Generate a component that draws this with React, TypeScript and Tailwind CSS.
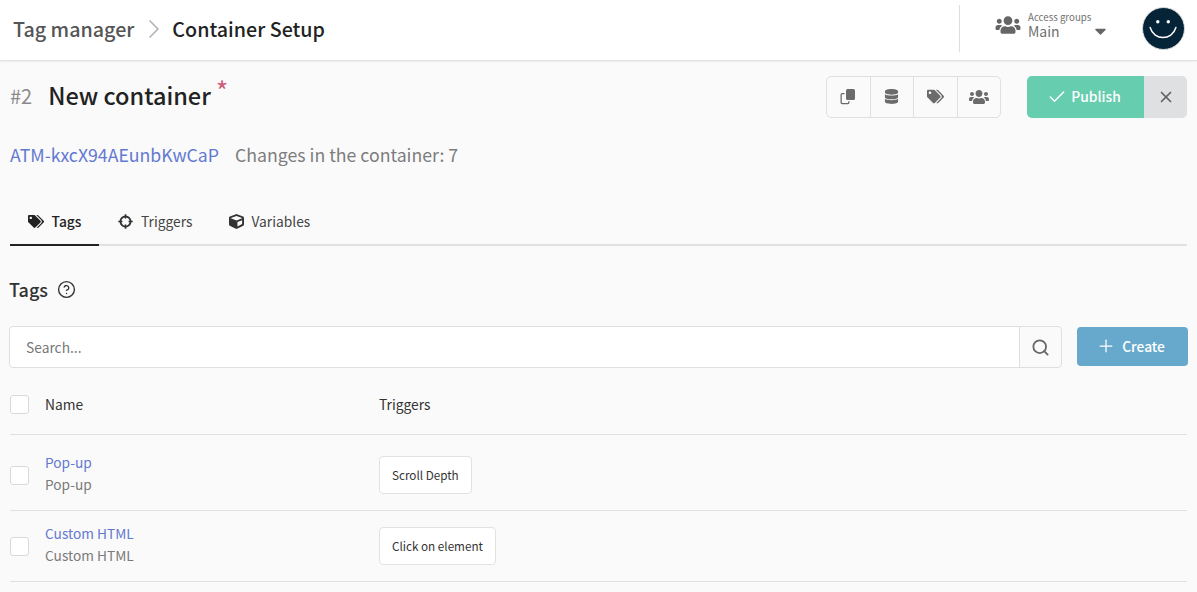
import { Check, ChevronRight, CircleHelp, Plus, Search, X } from 'lucide-react';
import { FaCaretDown, FaCube, FaDatabase, FaTags, FaUsers } from 'react-icons/fa';

const font = 'font-["Noto_Sans_CJK_JP","Noto_Sans",sans-serif]';

function CrosshairIcon({ className }: { className?: string }) {
  return (
    <svg viewBox="0 0 16 16" className={className} fill="none" stroke="currentColor">
      <circle cx="8" cy="8" r="5.4" strokeWidth="2" />
      <path d="M8 .3v4.4M8 11.3v4.4M.3 8h4.4M11.3 8h4.4" strokeWidth="1.8" />
    </svg>
  );
}

function CopyIcon({ className }: { className?: string }) {
  return (
    <svg viewBox="0 0 16 16" className={className} fill="currentColor">
      <path d="M6 1.500A1.500 1.500 0 0 1 7.500 0h6A1.500 1.500 0 0 1 15 1.500v8a1.500 1.500 0 0 1-1.500 1.500h-6A1.500 1.500 0 0 1 6 9.500z" />
      <path d="M4.600 4v1.300H2.500a.7.7 0 0 0-.7.7v7.300a.7.7 0 0 0 .7.7h5a.7.7 0 0 0 .7-.7v-1h1.300v1.300a1.700 1.700 0 0 1-1.700 1.700H2.200a1.700 1.700 0 0 1-1.700-1.700V5.700A1.700 1.700 0 0 1 2.200 4z" />
    </svg>
  );
}

function Smiley() {
  return (
    <div className="h-[43px] w-[43px] rounded-full border border-[#dddddd] bg-[#062438]">
      <svg viewBox="0 0 43 43" className="h-full w-full" fill="none">
        <circle cx="15.5" cy="14.500" r="1.800" fill="#fff" />
        <circle cx="26.500" cy="14.500" r="1.800" fill="#fff" />
        <path d="M7.500 20.500c4 14 23 14 27 0" stroke="#fff" strokeWidth="1.500" strokeLinecap="round" />
      </svg>
    </div>
  );
}

function Checkbox({ className = '' }: { className?: string }) {
  return <div className={`h-[19px] w-[19px] rounded-[3px] border border-[#d9d9d9] bg-white ${className}`} />;
}

function TagRow({ name, trigger, rowClass, checkClass }: { name: string; trigger: string; rowClass: string; checkClass: string }) {
  return (
    <div className={`flex items-center border-b border-[#e0e0e0] ${rowClass}`}>
      <div className="flex w-[35px]">
        <Checkbox className={checkClass} />
      </div>
      <div className="w-[334px] text-[13.7px] leading-[22px]">
        <div className="text-[#6379d1]">{name}</div>
        <div className="text-[#7b7b7b]">{name}</div>
      </div>
      <div className="mt-[4px] flex h-[38px] items-center rounded-[4px] border border-[#e2e2e2] bg-white px-[12px] text-[11.700px] text-[#333333]">
        {trigger}
      </div>
    </div>
  );
}

export default function App() {
  return (
    <div className={`${font} h-[592px] w-[1197px] overflow-hidden bg-[#fafafa]`}>
      <header className="flex h-[61px] items-center border-b border-[#e2e2e2] bg-white pb-[3px] pl-[13px] pr-[12px] shadow-[0_1px_2px_rgba(0,0,0,0.06)]">
        <span className="text-[19.700px] font-medium text-[#555555]">Tag manager</span>
        <ChevronRight className="ml-[4px] mr-[2px] h-[32px] w-[32px] text-[#b4b4b4]" strokeWidth={1.300} />
        <span className="text-[19.700px] font-medium text-[#222222]">Container Setup</span>
        <div className="ml-auto h-[47px] w-px bg-[#dddddd]" />
        <div className="mb-[8px] ml-[35px] flex w-[128px] items-center">
          <FaUsers className="h-[20px] w-[26px] text-[#666666]" />
          <div className="ml-[7px] flex flex-col text-[#707070]">
            <span className="text-[9.700px] leading-[12px]">Access groups</span>
            <span className="text-[14px] leading-[16px]">Main</span>
          </div>
          <FaCaretDown className="ml-auto mr-[16px] mt-[12px] h-[18px] w-[13px] text-[#666666]" />
        </div>
        <div className="ml-[19px]">
          <Smiley />
        </div>
      </header>

      <main className="pl-[10px] pr-[10px]">
        <div className="flex items-center pt-[13px]">
          <span className="mb-[1px] text-[20px] text-[#8a8a8a]">#2</span>
          <span className="mb-[3px] ml-[16px] text-[23.500px] font-medium leading-[42px] text-[#222222]">New container</span>
          <span className="mb-[12px] ml-[5px] text-[27px] leading-[20px] text-[#cf5d7c]">*</span>
          <div className="ml-auto flex h-[42px] w-[175px] rounded-[5px] border border-[#e0e0e0] text-[#6b6b6b]">
            <div className="flex flex-1 items-center justify-center border-r border-[#e0e0e0]"><CopyIcon className="h-[16px] w-[16px]" /></div>
            <div className="flex flex-1 items-center justify-center border-r border-[#e0e0e0]"><FaDatabase className="h-[15px] w-[15px]" /></div>
            <div className="flex flex-1 items-center justify-center border-r border-[#e0e0e0]"><FaTags className="h-[15px] w-[17px]" /></div>
            <div className="flex flex-1 items-center justify-center"><FaUsers className="h-[16px] w-[20px]" /></div>
          </div>
          <div className="ml-[26px] flex h-[42px] w-[117px] items-center justify-center gap-[4px] rounded-l-[5px] bg-[#66cdaf] pr-[3px] text-[13.800px] font-medium text-white">
            <Check className="h-[20px] w-[20px]" strokeWidth={1.750} />
            Publish
          </div>
          <div className="flex h-[42px] w-[43px] items-center justify-center rounded-r-[5px] bg-[#dfe0e2] text-[#5f6368]">
            <X className="h-[18px] w-[18px]" strokeWidth={2.250} />
          </div>
        </div>

        <div className="mt-[22px] flex items-center text-[17.700px] leading-[26px]">
          <span className="text-[#6379d1]">ATM-kxcX94AEunbKwCaP</span>
          <span className="ml-[16px] text-[#7d7d7d]">Changes in the container: 7</span>
        </div>

        <nav className="mt-[32px] flex h-[47px] border-b-2 border-[#e0e0e0] text-[13.800px]">
          <div className="-mb-[2px] flex w-[89px] items-center justify-center gap-[8px] border-b-2 border-[#222222] font-medium text-[#222222]">
            <FaTags className="h-[13px] w-[16px]" />
            Tags
          </div>
          <div className="ml-[19px] flex items-center gap-[8px] text-[#444444]">
            <CrosshairIcon className="h-[15px] w-[15px] text-[#333333]" />
            Triggers
          </div>
          <div className="ml-[37px] flex items-center gap-[7px] text-[#444444]">
            <FaCube className="h-[15px] w-[15px] text-[#333333]" />
            Variables
          </div>
        </nav>

        <div className="mt-[29px] flex items-center">
          <span className="-ml-px text-[18px] font-medium leading-[28px] text-[#333333]">Tags</span>
          <CircleHelp className="ml-[9px] h-[19px] w-[19px] text-[#333333]" strokeWidth={1.750} />
        </div>

        <div className="mt-[23px] flex items-center">
          <div className="-ml-px flex h-[42px] w-[1053px] shrink-0 rounded-[4px] border border-[#dfdfdf]">
            <div className="flex flex-1 items-center rounded-l-[4px] bg-white pl-[16px] text-[13.800px] text-[#777777]">Search...</div>
            <div className="flex w-[42px] items-center justify-center border-l border-[#dfdfdf]">
              <Search className="h-[19px] w-[19px] text-[#666666]" strokeWidth={2.250} />
            </div>
          </div>
          <div className="mb-[2px] ml-[15px] flex h-[39px] w-[111px] shrink-0 items-center justify-center gap-[6px] rounded-[4px] bg-[#67a9cd] pr-[4px] text-[13.800px] font-medium text-white">
            <Plus className="h-[20px] w-[20px]" strokeWidth={1.500} />
            Create
          </div>
        </div>

        <div className="flex h-[67px] items-center border-b border-[#e0e0e0] pt-[6px] text-[13.800px] text-[#333333]">
          <div className="flex w-[35px]">
            <Checkbox />
          </div>
          <div className="w-[334px]">Name</div>
          <div>Triggers</div>
        </div>
        <TagRow name="Pop-up" trigger="Scroll Depth" rowClass="h-[76px]" checkClass="mt-[6px]" />
        <TagRow name="Custom HTML" trigger="Click on element" rowClass="h-[71px] pb-[4px]" checkClass="mt-[4px]" />
      </main>
    </div>
  );
}
